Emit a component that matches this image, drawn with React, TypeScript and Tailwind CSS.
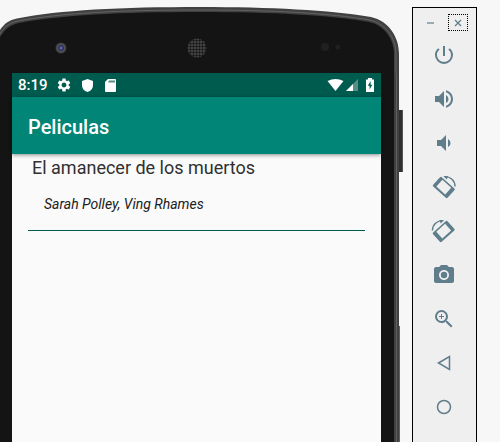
import type { ReactNode } from "react";
import {
  MdCameraAlt,
  MdPowerSettingsNew,
  MdSettings,
  MdVolumeDown,
  MdVolumeUp,
  MdZoomIn,
} from "react-icons/md";

const movies = [
  { title: "El amanecer de los muertos", cast: "Sarah Polley, Ving Rhames" },
];

function RotateIcon({ mirrored = false }: { mirrored?: boolean }) {
  return (
    <svg viewBox="0 0 24 24" className="size-6 overflow-visible" fill="none" stroke="currentColor">
      <g transform={mirrored ? "translate(23.5 0) scale(-1 1)" : undefined}>
        <path
          fill="currentColor"
          fillRule="evenodd"
          stroke="none"
          d="M8 2.2q.9-.9 1.8 0L22.4 13.4q.9.9 0 1.8l-6.800 7.600q-.9.9-1.800 0L1.200 11.600q-.9-.9 0-1.800ZM10.400 4.800 4.400 11.600 13.200 19.600 19.200 12.800Z"
        />
        <path d="M12.500 1.600C18.400 1.400 23 5.600 23.100 11.500" strokeWidth="1.400" />
        <path d="M11.400 .900H16L14.800 4.600Z" fill="currentColor" stroke="none" />
      </g>
    </svg>
  );
}

const controls: { label: string; icon: ReactNode }[] = [
  { label: "Power", icon: <MdPowerSettingsNew className="size-6" /> },
  { label: "Volume up", icon: <MdVolumeUp className="size-6" /> },
  { label: "Volume down", icon: <MdVolumeDown className="size-6" /> },
  { label: "Rotate left", icon: <RotateIcon /> },
  { label: "Rotate right", icon: <RotateIcon mirrored /> },
  { label: "Take screenshot", icon: <MdCameraAlt className="size-6" /> },
  { label: "Zoom mode", icon: <MdZoomIn className="size-6" /> },
  {
    label: "Back",
    icon: (
      <svg viewBox="0 0 24 24" className="size-6" fill="none" stroke="currentColor" strokeWidth="1.5">
        <path d="M6.500 12 17.500 5.500V18.500Z" />
      </svg>
    ),
  },
  {
    label: "Home",
    icon: (
      <svg viewBox="0 0 24 24" className="size-6" fill="none" stroke="currentColor" strokeWidth="1.500">
        <circle cx="12" cy="12" r="6.500" />
      </svg>
    ),
  },
];

function TopBezel() {
  return (
    <svg
      viewBox="0 0 403 73"
      preserveAspectRatio="none"
      className="block h-[73px] w-full"
      aria-hidden="true"
    >
      <defs>
        <pattern id="mesh" width="3" height="3" patternUnits="userSpaceOnUse">
          <rect width="3" height="3" fill="#505050" />
          <circle cx="1.500" cy="1.500" r="1.200" fill="#151515" />
        </pattern>
        <radialGradient id="lens">
          <stop offset="0" stopColor="#7777bd" />
          <stop offset=".45" stopColor="#29295c" />
          <stop offset=".65" stopColor="#55555a" />
          <stop offset="1" stopColor="#353535" />
        </radialGradient>
      </defs>
      <path
        d="M0 73V30C4 24 9 20 17 18.500C60 10 120 7 200 7C270 7 330 10 371 17C389 21 399 37 399 54V73Z"
        fill="#414141"
      />
      <path
        d="M0 34C4 27 9 23 18 21C60 13 120 10 200 10C270 10 330 13 370 20C386 24 396 38 396 54V73"
        fill="none"
        stroke="#626262"
      />
      <path
        d="M0 73V37C5 29 10 25 19 23C60 15 120 12 200 12C270 12 330 15 369 22C384 25 394 39 394 54V73Z"
        fill="#141414"
      />
      <circle cx="61" cy="48" r="5.500" fill="url(#lens)" />
      <circle cx="197" cy="48" r="9.500" fill="url(#mesh)" />
      <circle cx="325" cy="47" r="4" fill="#202020" />
      <circle cx="338" cy="47" r="2.500" fill="#202020" />
    </svg>
  );
}

function StatusBar() {
  return (
    <div className="flex h-6 items-center justify-between bg-[#005b4f] px-1.5 text-white">
      <div className="flex items-center gap-2">
        <span className="text-[15px] leading-6 font-medium">8:19</span>
        <MdSettings className="size-4" />
        <svg viewBox="0 0 15 15" className="size-[15px]" fill="currentColor">
          <path d="M7.500 1 13 3V7C13 10.500 11 13 7.500 14C4 13 2 10.500 2 7V3Z" />
        </svg>
        <svg viewBox="0 0 15 15" className="size-[15px]">
          <path d="M5 1H12Q13 1 13 2V13Q13 14 12 14H3Q2 14 2 13V4Z" fill="currentColor" />
          <path d="M6 2.500H12V4.500H5Z" fill="#568f85" />
        </svg>
      </div>
      <div className="flex items-center">
        <svg viewBox="0 0 17 14" className="h-3.5 w-[17px]" fill="currentColor">
          <path d="M.5 3Q8.500-1 16.500 3L8.500 13Z" />
        </svg>
        <svg viewBox="0 0 14 14" className="ml-px h-3.5 w-3.5">
          <path d="M1 13 13 1V13Z" fill="#568f85" />
          <path d="M1 13 8 6V13Z" fill="currentColor" />
        </svg>
        <svg viewBox="0 0 10 14" className="ml-1.5 h-3.5 w-2.5">
          <path d="M3 0H7V1.500H9V14H1V1.500H3Z" fill="currentColor" />
          <path d="M5.600 3 2.800 7.800H4.600V11.500L7.300 6.700H5.600Z" fill="#005b4f" />
        </svg>
      </div>
    </div>
  );
}

function Phone() {
  return (
    <main className="flex min-w-0 flex-1 flex-col">
      <TopBezel />
      <div className="flex flex-1">
        <div className="w-3 bg-[#141414]" />
        <div className="min-w-0 flex-1 bg-[#fafafa]">
          <StatusBar />
          <header className="relative flex h-[57px] items-center bg-[#018577] px-4 pt-0.5 shadow-[0_1px_4px_rgba(0,0,0,0.45)]">
            <h1 className="text-[20px] leading-6 font-medium text-white">Peliculas</h1>
          </header>
          <ul className="px-4">
            {movies.map((movie) => (
              <li key={movie.title} className="border-b border-[#005b4f] pb-4">
                <h2 className="pl-1 text-[18px] leading-7 text-[#303030]">{movie.title}</h2>
                <p className="mt-3 pl-4 text-[14px] leading-5 text-[#202020] italic">{movie.cast}</p>
              </li>
            ))}
          </ul>
        </div>
        <div className="w-[13px] bg-[#141414]" />
        <div className="w-[5px] border-x-2 border-[#414141] bg-[#606060]" />
        <div className="w-1 pt-[37px]">
          <div className="h-[62px] border-r border-[#555555] bg-[#303030]" />
          <div className="mt-[154px] h-full w-px bg-[#606060]" />
        </div>
      </div>
    </main>
  );
}

function Toolbar() {
  return (
    <aside
      aria-label="Emulator controls"
      className="mt-[7px] mr-[23px] flex w-[65px] flex-col border border-b-0 border-black bg-[#efefef] text-[#607d8b]"
    >
      <div className="flex justify-end gap-2 pt-1.5 pr-2 pb-0.5">
        <button aria-label="Minimize" className="flex h-[17px] w-5 items-center justify-center">
          <span className="h-0.5 w-[7px] bg-[#9aabb3]" />
        </button>
        <button
          aria-label="Close"
          className="flex h-[17px] w-5 items-center justify-center border border-dotted border-black"
        >
          <svg viewBox="0 0 8 8" className="size-2" stroke="currentColor" strokeWidth="1.300">
            <path d="M1 1 7 7M7 1 1 7" />
          </svg>
        </button>
      </div>
      {controls.map(({ label, icon }) => (
        <button key={label} aria-label={label} className="flex h-11 shrink-0 items-center justify-center pr-px">
          {icon}
        </button>
      ))}
    </aside>
  );
}

export default function App() {
  return (
    <div className="flex h-screen gap-[9px] overflow-hidden bg-[#f7f7f7] font-[Roboto,sans-serif]">
      <Phone />
      <Toolbar />
    </div>
  );
}
